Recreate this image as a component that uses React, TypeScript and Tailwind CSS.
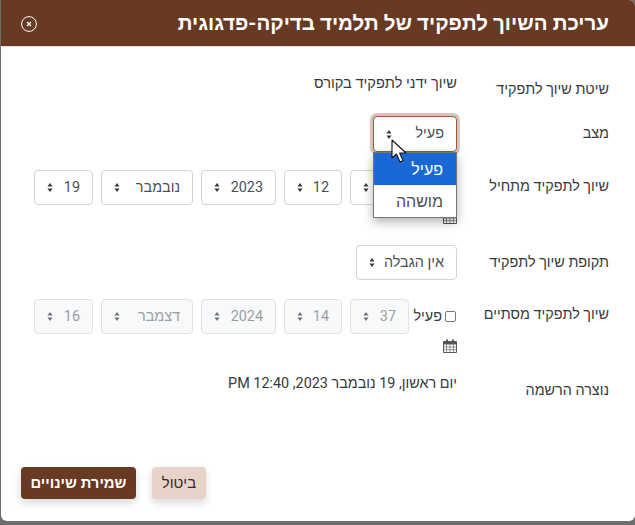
const font = "font-['Roboto','Liberation_Sans',sans-serif]"

function Arrows({ dim }: { dim?: boolean }) {
  return (
    <svg width="6" height="9" viewBox="0 0 6 9" className="shrink-0">
      <path d="M3 0 L5.6 3.4 H0.4 Z M3 9 L0.4 5.6 H5.6 Z" fill={dim ? '#6b7280' : '#343a40'} />
    </svg>
  )
}

function Select({ value, width, disabled }: { value: string; width: string; disabled?: boolean }) {
  return (
    <div
      className={`${width} h-[35px] flex items-center justify-between pr-[12px] pl-[12px] rounded-[4px] border text-[14.4px] ${
        disabled ? 'bg-[#f8f9fa] border-[#dee2e6] text-[#9a9ea3]' : 'bg-white border-[#ced4da] text-[#495057]'
      }`}
    >
      <span>{value}</span>
      <Arrows dim={disabled} />
    </div>
  )
}

function Calendar() {
  return (
    <svg width="14" height="14" viewBox="0 0 14 14" className="shrink-0">
      <path d="M3 0.5h2v2h-2zM9 0.5h2v2h-2z" fill="#555" />
      <path d="M0.5 2.5h13v11h-13z" fill="none" stroke="#555" />
      <path d="M0.5 2.5h13v3h-13z" fill="#555" />
      <path d="M3.5 5.5v8M7 5.5v8M10.5 5.5v8M0.5 8h13M0.5 10.7h13" stroke="#777" strokeWidth="0.8" />
    </svg>
  )
}

function Row({ label, children, className }: { label: string; children?: React.ReactNode; className?: string }) {
  return (
    <div className={`flex ${className ?? ''}`}>
      <div className="w-[152px] shrink-0 text-[14.4px] text-[#343a40] leading-[24px]">{label}</div>
      <div className="flex-1 min-w-0">{children}</div>
    </div>
  )
}

function DateRow({ values, disabled, checkbox }: { values: string[]; disabled?: boolean; checkbox?: boolean }) {
  return (
    <div className="flex items-center gap-[8px]">
      <div className="flex items-center gap-[3px] text-[14.4px] text-[#343a40] w-[40px] shrink-0 whitespace-nowrap">
        {checkbox && (
          <>
            <span className="w-[11px] h-[11px] border border-[#767676] rounded-[2px] bg-white shrink-0 mr-[1px]" />
            <span>פעיל</span>
          </>
        )}
      </div>
      <Select value={values[0]} width="w-[59px]" disabled={disabled} />
      <Select value={values[1]} width="w-[58px]" disabled={disabled} />
      <Select value={values[2]} width="w-[75px]" disabled={disabled} />
      <Select value={values[3]} width="w-[92px]" disabled={disabled} />
      <Select value={values[4]} width="w-[59px]" disabled={disabled} />
    </div>
  )
}

export default function App() {
  return (
    <div dir="rtl" className={`${font} w-[635px] h-[525px] bg-[#6e6e6e] overflow-hidden`}>
      <div className="w-[634px] h-[521px] bg-white rounded-tr-[6px] rounded-b-[6px] flex flex-col">
        <div className="h-[47px] shrink-0 bg-[#683923] border-b border-[#e9e3df] rounded-tr-[6px] flex items-center justify-between pr-[26px] pl-[20px]">
          <h1 className="text-[20.5px] font-bold text-white whitespace-nowrap">עריכת השיוך לתפקיד של תלמיד בדיקה-פדגוגית</h1>
          <svg width="16" height="16" viewBox="0 0 16 16" className="shrink-0 mt-[2px]">
            <circle cx="8" cy="8" r="7.4" fill="none" stroke="#fff" />
            <path d="M6 6l4 4M10 6l-4 4" stroke="#fff" strokeWidth="1.2" />
          </svg>
        </div>

        <div className="flex-1 pr-[26px] pt-[31px]">
          <Row label="שיטת שיוך לתפקיד" className="h-[44px]">
            <p className="text-[14.6px] text-[#343a40] leading-[22px] -mt-[6px]">שיוך ידני לתפקיד בקורס</p>
          </Row>

          <Row label="מצב" className="h-[53px]">
            <div className="relative w-[84px] -mt-[6px]">
              <div className="h-[36px] flex items-center justify-between px-[12px] rounded-[4px] border border-[#a5552b] ring-[3px] ring-[#cfc8c2] bg-white text-[14.4px] text-[#495057]">
                <span>פעיל</span>
                <Arrows />
              </div>
              <div className="absolute top-[36px] right-0 w-[84px] h-[66px] bg-white border border-[#767676] shadow-[0_4px_10px_rgba(0,0,0,0.3)] z-10 text-[16px]">
                <div className="h-[32px] bg-[#1a68d6] text-white font-medium flex items-center pr-[13px] pt-[2px]">פעיל</div>
                <div className="h-[32px] text-[#495057] flex items-center pr-[13px] pt-[2px]">מושהה</div>
              </div>
              <svg width="18" height="26" viewBox="0 0 18 26" className="absolute top-[23px] left-[18px] z-20">
                <path d="M1 1 L1 19 L5.5 15 L9 23 L12 21.6 L8.6 14 L15 14 Z" fill="#fff" stroke="#111" strokeWidth="1.1" strokeLinejoin="round" />
              </svg>
            </div>
          </Row>

          <Row label="שיוך לתפקיד מתחיל" className="h-[76px]">
            <div className="-mt-[5px]">
              <DateRow values={['40', '12', '2023', 'נובמבר', '19']} />
              <div className="mt-[5px]"><Calendar /></div>
            </div>
          </Row>

          <Row label="תקופת שיוך לתפקיד" className="h-[52px]">
            <div className="-mt-[6px]">
              <Select value="אין הגבלה" width="w-[101px]" />
            </div>
          </Row>

          <Row label="שיוך לתפקיד מסתיים" className="h-[76px]">
            <div className="-mt-[4px]">
              <DateRow values={['37', '14', '2024', 'דצמבר', '16']} disabled checkbox />
              <div className="mt-[5px]"><Calendar /></div>
            </div>
          </Row>

          <Row label="נוצרה הרשמה">
            <p className="text-[14.4px] text-[#343a40] leading-[22px] -mt-[6px]">יום ראשון, 19 נובמבר 2023, 12:40 PM</p>
          </Row>
        </div>

        <div dir="ltr" className="flex gap-[16px] pl-[20px] pb-[22px]">
          <button className="w-[115px] h-[32px] bg-[#683923] text-white text-[14.8px] font-bold rounded-[4px] shadow-[0_4px_8px_rgba(0,0,0,0.15)]">שמירת שינויים</button>
          <button className="w-[54px] h-[32px] bg-[#e6d4ca] text-[#3a2a22] text-[15px] rounded-[4px] shadow-[0_4px_8px_rgba(0,0,0,0.15)]">ביטול</button>
        </div>
      </div>
    </div>
  )
}
